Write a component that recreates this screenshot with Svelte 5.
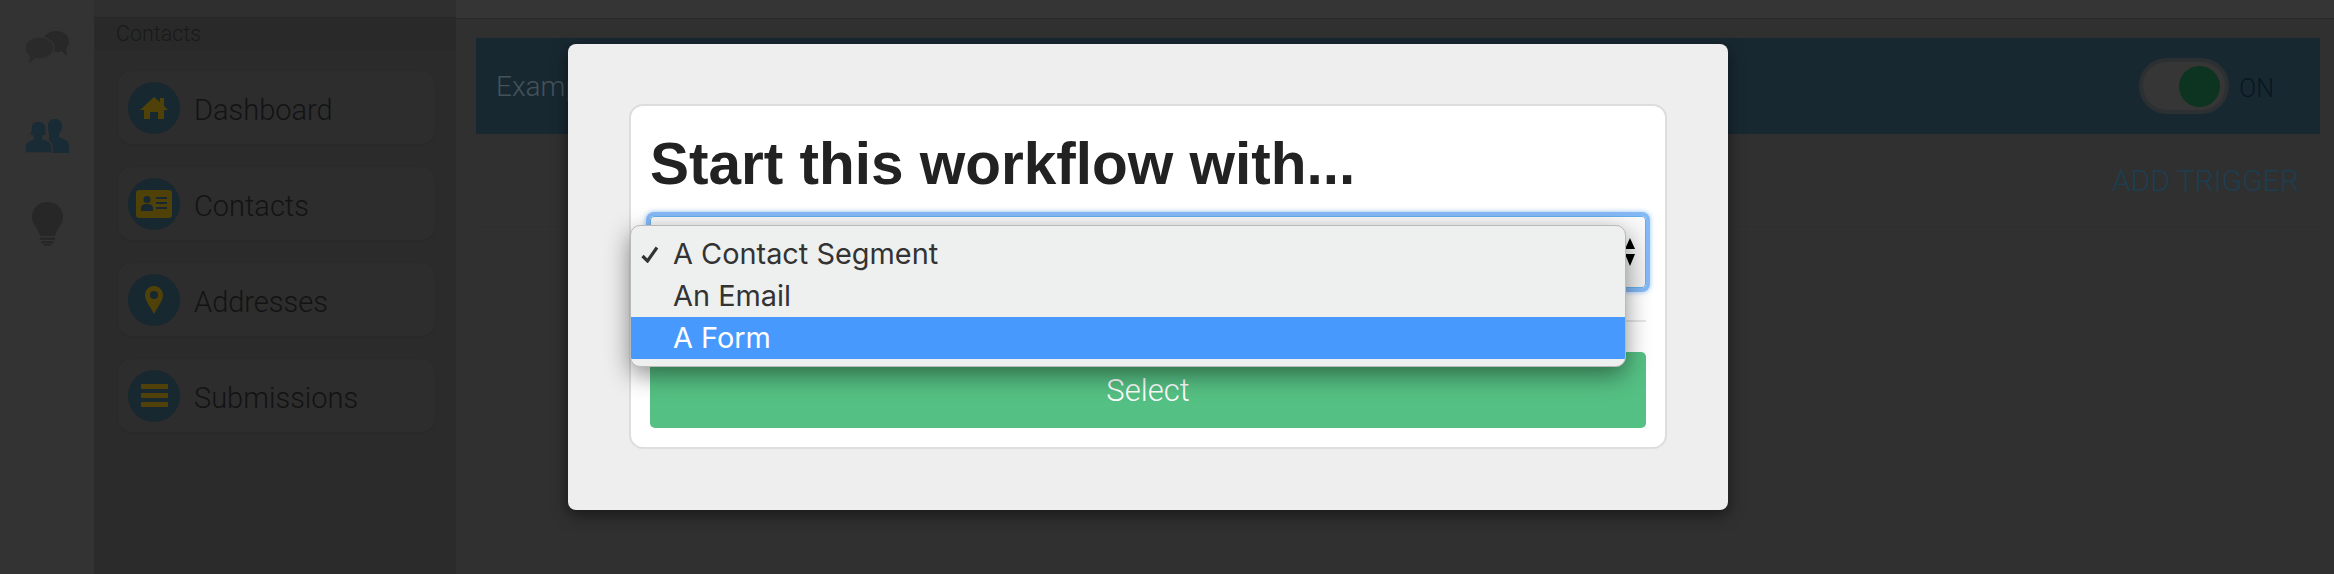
<script>
  const nav = [
    { key: 'home', label: 'Dashboard' },
    { key: 'card', label: 'Contacts' },
    { key: 'pin', label: 'Addresses' },
    { key: 'list', label: 'Submissions' },
  ];
  const options = [
    { label: 'A Contact Segment', checked: true },
    { label: 'An Email' },
    { label: 'A Form', active: true },
  ];
</script>

<div class="page">
  <aside class="rail">
    <!-- overlapping speech bubbles -->
    <svg class="chat" viewBox="0 0 44 33" width="44" height="33" aria-hidden="true">
      <g class="back">
        <ellipse cx="31" cy="10.500" rx="13" ry="10.500" />
        <path d="M34 18l8 7-1-9z" />
      </g>
      <g class="front">
        <path d="M14.500 6C22.500 6 29 11 29 17s-6.500 11-14.500 11c-1.500 0-3-.2-4.400-.5C8.500 30 6 32.500 2 33c1.500-2 2.500-4 2.600-7.800C1.800 23.200 0 20.300 0 17 0 11 6.500 6 14.500 6z" />
      </g>
    </svg>
    <svg class="people" viewBox="0 0 44 34" width="44" height="34" aria-hidden="true">
      <path class="rear" d="M30 0c4 0 7 2 7 7 0 3-1 6-3 8v3c4 2 10 3 10 9v7H24V15c-1-2-1-5-1-8 0-5 3-7 7-7z" />
      <path class="fore" d="M13 2c5 0 8 3 8 8 0 3 0 5 1 6l-4 1v3c5 1 9 3 9 8v6H0v-6c0-5 4-7 8-8v-3l-4-1c1-1 2-3 2-6 0-5 2-8 7-8z" />
    </svg>
    <svg class="bulb" viewBox="0 0 31 44" width="31" height="44" aria-hidden="true">
      <path d="M15.500 0C7 0 0 6 0 15c0 7 6 11 8 19h15c2-8 8-12 8-19C31 6 24 0 15.500 0z" />
      <rect x="8" y="35.500" width="15" height="2.500" rx="1.200" />
      <rect x="9" y="39" width="13" height="2.500" rx="1.200" />
      <rect x="11.500" y="42" width="8" height="2" rx="1" />
    </svg>
  </aside>

  <nav class="sidebar">
    <div class="side-top"></div>
    <div class="side-title">Contacts</div>
    <ul class="side-list">
      {#each nav as item}
        <li class="side-card">
          <span class="disc">
            {#if item.key === 'home'}
              <svg viewBox="0 0 28 22" width="28" height="22" aria-hidden="true">
                <path d="M14 0l6 5V1h4v8l4 4h-4v9h-6v-7h-8v7H4v-9H0z" />
              </svg>
            {:else if item.key === 'card'}
              <svg viewBox="0 0 36 28" width="36" height="28" aria-hidden="true">
                <path fill-rule="evenodd" d="M3 0h30a3 3 0 0 1 3 3v22a3 3 0 0 1-3 3H3a3 3 0 0 1-3-3V3a3 3 0 0 1 3-3zm8 6a3.500 3.500 0 1 0 0 7 3.500 3.500 0 0 0 0-7zM5 21h12v-3c0-3-3-4-6-4s-6 1-6 4zM20 7v2h11V7zm0 5v2h11v-2zm0 5v2h11v-2z" />
              </svg>
            {:else if item.key === 'pin'}
              <svg viewBox="0 0 18 28" width="18" height="28" aria-hidden="true">
                <path fill-rule="evenodd" d="M9 0c5 0 9 4 9 9 0 6-6 13-9 19-3-6-9-13-9-19 0-5 4-9 9-9zm0 5a4 4 0 1 0 0 8 4 4 0 0 0 0-8z" />
              </svg>
            {:else}
              <svg viewBox="0 0 27 23" width="27" height="23" aria-hidden="true">
                <path d="M0 0h27v5H0zM0 9h27v5H0zM0 18h27v5H0z" />
              </svg>
            {/if}
          </span>
          <span class="side-label">{item.label}</span>
        </li>
      {/each}
    </ul>
  </nav>

  <main class="main">
    <div class="main-top"></div>
    <div class="main-body">
      <header class="banner">
        <span class="banner-title">Example Workflow</span>
        <div class="switch-wrap">
          <span class="switch"><span class="knob"></span></span>
          <span class="switch-label">ON</span>
        </div>
      </header>
      <div class="trigger-row">
        <span class="add-trigger">ADD TRIGGER</span>
      </div>
    </div>
  </main>

  <div class="overlay">
    <section class="modal">
      <div class="modal-card">
        <h1>Start this workflow with...</h1>
        <div class="select-box">
          <svg class="arrows" viewBox="0 0 10 28" width="10" height="28" aria-hidden="true">
            <path d="M5 0l5 11H0zM0 16h10L5 28z" />
          </svg>
        </div>
        <hr />
        <button type="button" class="select-btn">Select</button>

        <ul class="menu">
          {#each options as opt}
            <li class="menu-row" class:active={opt.active}>
              {#if opt.checked}
                <svg class="tick" viewBox="0 0 18 17" width="18" height="17" aria-hidden="true">
                  <path d="M1.500 10l5 5L16 1.500" fill="none" stroke="currentColor" stroke-width="3.200" />
                </svg>
              {/if}
              {opt.label}
            </li>
          {/each}
        </ul>
      </div>
    </section>
  </div>
</div>

<style>
  :global(body) {
    margin: 0;
    background: #303030;
  }

  .page {
    position: relative;
    display: flex;
    width: 2334px;
    height: 574px;
    overflow: hidden;
    font-family: Roboto, "Liberation Sans", sans-serif;
    font-weight: 300;
  }

  /* icon rail */
  .rail {
    display: flex;
    flex: 0 0 94px;
    flex-direction: column;
    align-items: center;
    box-sizing: border-box;
    padding-top: 31px;
    background: #333;
  }
  .chat .back { fill: #282828; }
  .chat .front { fill: #2a2a2a; stroke: #333; stroke-width: 1.500; }
  .people { margin-top: 55px; }
  .people .rear { fill: #192b34; }
  .people .fore { fill: #192b34; stroke: #333; stroke-width: 1.500; }
  .bulb { margin-top: 49px; fill: #272727; }

  /* sidebar */
  .sidebar {
    flex: 0 0 362px;
    background: #2b2b2b;
  }
  .side-top {
    height: 18px;
    box-sizing: border-box;
    background: #2f2f2f;
    border-bottom: 1px solid #282828;
  }
  .side-title {
    height: 32px;
    box-sizing: border-box;
    padding-left: 22px;
    background: #292929;
    color: #191919;
    font-size: 21.500px;
    line-height: 32px;
  }
  .side-list {
    margin: 0;
    padding: 21px 21px 0 24px;
    list-style: none;
  }
  .side-card {
    display: flex;
    align-items: center;
    gap: 14px;
    box-sizing: border-box;
    height: 73px;
    margin-bottom: 23px;
    padding-left: 10px;
    background: #2d2d2d;
    border-radius: 14px;
    box-shadow: 0 1px 2px rgba(0, 0, 0, 0.08);
  }
  .disc {
    display: flex;
    flex: 0 0 52px;
    align-items: center;
    justify-content: center;
    height: 52px;
    background: #172830;
    border-radius: 50%;
  }
  .disc svg { fill: #4f4108; }
  .side-label {
    padding-top: 5px;
    color: #131313;
    font-size: 29px;
    line-height: 1;
  }

  /* main area */
  .main {
    flex: 1;
    min-width: 0;
    background: #303030;
  }
  .main-top {
    height: 19px;
    box-sizing: border-box;
    background: #353535;
    border-bottom: 1px solid #292929;
  }
  .main-body {
    padding: 19px 14px 0 20px;
  }
  .banner {
    display: flex;
    align-items: center;
    justify-content: space-between;
    height: 96px;
    padding: 0 46px 0 20px;
    background: #182831;
  }
  .banner-title {
    color: #44525a;
    font-size: 28px;
  }
  .switch-wrap {
    display: flex;
    align-items: center;
    gap: 10px;
  }
  .switch {
    display: flex;
    align-items: center;
    justify-content: flex-end;
    box-sizing: border-box;
    width: 90px;
    height: 56px;
    padding-right: 5px;
    background: #363636;
    border: 4px solid #2c3033;
    border-radius: 28px;
  }
  .knob {
    width: 41px;
    height: 41px;
    background: #0c3420;
    border-radius: 50%;
  }
  .switch-label {
    margin-top: 4px;
    color: #0a1620;
    font-size: 25px;
  }
  .trigger-row {
    display: flex;
    align-items: center;
    justify-content: flex-end;
    height: 92px;
    padding-right: 21px;
    border-bottom: 1px solid #2e2e2e;
  }
  .add-trigger {
    color: #1c3e50;
    font-size: 30px;
  }

  /* modal */
  .overlay {
    position: absolute;
    inset: 0;
    padding: 44px 0 0 568px;
  }
  .modal {
    box-sizing: border-box;
    width: 1160px;
    height: 466px;
    padding: 60px 61px 61px;
    background: #eee;
    border-radius: 8px;
    box-shadow: 0 5px 15px rgba(0, 0, 0, 0.5);
  }
  .modal-card {
    position: relative;
    box-sizing: border-box;
    height: 345px;
    padding: 26px 19px 19px;
    background: #fff;
    border: 2px solid #ddd;
    border-radius: 14px;
  }
  h1 {
    margin: 0 0 20px;
    color: #222;
    font-family: "Liberation Sans", Arial, sans-serif;
    font-size: 58.500px;
    font-weight: 700;
    line-height: 64px;
  }
  .select-box {
    display: flex;
    align-items: center;
    justify-content: flex-end;
    box-sizing: border-box;
    height: 72px;
    padding-right: 10px;
    background: linear-gradient(#fafafa, #efefef);
    border: 1px solid #66afe9;
    border-radius: 4px;
    box-shadow: 0 0 0 4px #85b9f6, 0 0 4px 5px rgba(133, 185, 246, 0.6);
  }
  .arrows { fill: #000; }
  hr {
    height: 2px;
    margin: 32px 0 30px;
    background: #e6e6e6;
    border: 0;
  }
  .select-btn {
    display: block;
    width: 100%;
    height: 76px;
    padding: 0;
    background: #55c083;
    border: 0;
    border-radius: 5px;
    color: #fff;
    font-family: inherit;
    font-size: 31px;
    font-weight: 300;
  }

  /* open native-looking dropdown */
  .menu {
    position: absolute;
    top: 119px;
    left: -1px;
    box-sizing: border-box;
    width: 996px;
    height: 142px;
    margin: 0;
    padding: 7px 0;
    overflow: hidden;
    list-style: none;
    background: #eef0f0;
    border: 1px solid #b9b9b9;
    border-radius: 10px;
    box-shadow: 0 8px 24px rgba(0, 0, 0, 0.45);
    font-family: Inter, "Liberation Sans", sans-serif;
    font-size: 28.900px;
    font-weight: 400;
  }
  .menu-row {
    position: relative;
    height: 42px;
    padding-left: 42px;
    color: #333;
    line-height: 42px;
  }
  .menu-row.active {
    background: #4899fd;
    color: #fff;
  }
  .tick {
    position: absolute;
    top: 13px;
    left: 10px;
  }
</style>
